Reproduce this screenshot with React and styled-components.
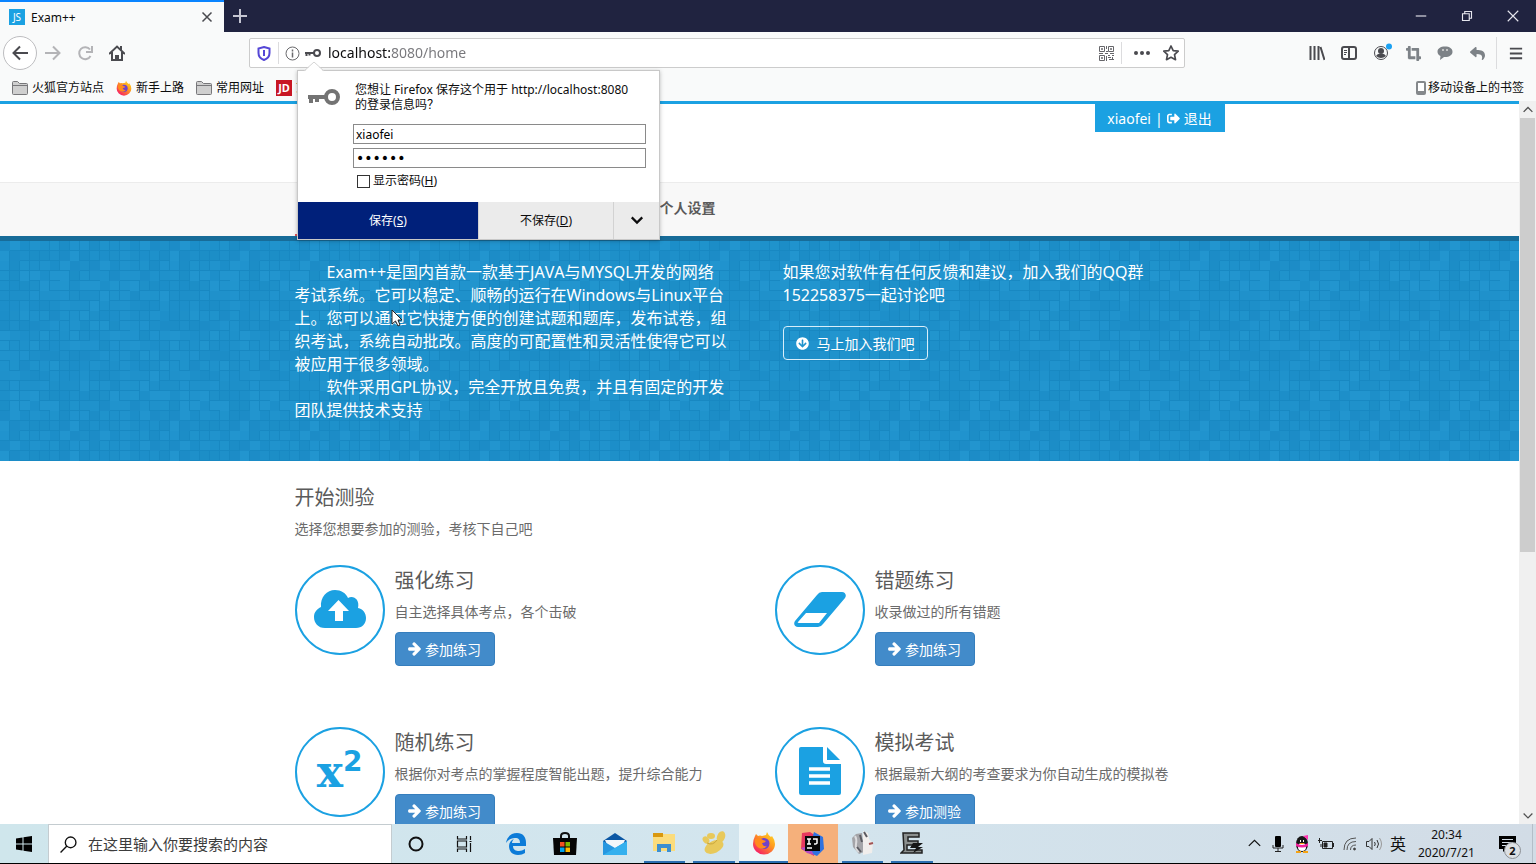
import React from "react"

import styled, {createGlobalStyle, css, ThemeProvider} from "styled-components"
import {FaArrowCircleDown, FaSignOutAlt, FaCropAlt, FaReply} from "react-icons/fa"

const theme = {
    primary: "#1ba1e2",
    button: "#428bca",
    hero: "#1d92cd",
    text: "#5a5a5a",
    chrome: "#f9fafa",
    titlebar: "#202340",
    icon: "#4a4a4f",
    fam: "'Noto Sans', 'Noto Sans CJK SC', sans-serif",
}

const GlobalStyle = createGlobalStyle`
    * { box-sizing: border-box; }
    body {
        margin: 0;
        font-family: ${theme.fam};
        font-kerning: none;
        color: ${theme.text};
        background: #fff;
    }
    button, input { font-family: inherit; }
    h1, h2, p { margin: 0; font-weight: 400; }
    svg { display: block; flex: none; }
`

const center = css`
    display: flex;
    align-items: center;
    justify-content: center;
`

const Screen = styled.div`
    display: flex;
    flex-direction: column;
    height: 100vh;
    overflow: hidden;
`

//BROWSER
const TabBar = styled.div`
    display: flex;
    height: 32px;
    flex: none;
    background: ${props => props.theme.titlebar};
`
const Tab = styled.div`
    display: flex;
    align-items: center;
    gap: 6px;
    width: 224px;
    padding: 0 8px 0 9px;
    border-top: 2px solid #0a84ff;
    background: ${props => props.theme.chrome};
    color: #0c0c0d;
    font-size: 12px;
`
const TabTitle = styled.span`
    flex: 1;
`
const Favicon = styled.span`
    ${center}
    width: 16px;
    height: 16px;
    background: ${props => props.$bg || props.theme.primary};
    color: #fff;
    font-size: ${props => props.$size || 10}px;
    font-weight: ${props => props.$bold ? 700 : 400};
    line-height: 16px;
`
const IconButton = styled.button`
    ${center}
    width: ${props => props.$w || 32}px;
    height: 32px;
    padding: 0;
    border: 0;
    background: none;
    color: ${props => props.$color || props.theme.icon};
`
const TabClose = styled(IconButton)`
    width: 18px;
`
const WindowControls = styled.div`
    display: flex;
    margin-left: auto;
`
const Toolbar = styled.div`
    display: flex;
    align-items: center;
    height: 42px;
    flex: none;
    padding: 0 4px 0 3px;
    background: ${props => props.theme.chrome};
`
const BackButton = styled(IconButton)`
    width: 34px;
    height: 34px;
    border: 1px solid #bdbdc0;
    border-radius: 50%;
    background: #fff;
`
const UrlBar = styled.div`
    position: relative;
    display: flex;
    align-items: center;
    flex: 1;
    height: 30px;
    margin: 0 116px;
    padding-right: 3px;
    border: 1px solid #ccc;
    border-radius: 2px;
    background: #fff;
`
const UrlInput = styled.input`
    flex: 1;
    min-width: 0;
    padding: 0 0 0 7px;
    border: 0;
    font-size: 14px;
    line-height: 20px;
    color: transparent;
    background: linear-gradient(90deg, #0c0c0d 69px, #77777b 69px);
    background-clip: text;
`
const UrlSlot = styled.span`
    ${center}
    width: ${props => props.$w}px;
    color: ${props => props.theme.icon};
`
const Divider = styled.span`
    width: 1px;
    height: ${props => props.$h || 22}px;
    margin: 0 ${props => props.$gap || 0}px;
    background: #dcdcde;
`
const Bookmarks = styled.div`
    display: flex;
    align-items: center;
    gap: 12px;
    height: 27px;
    flex: none;
    padding: 0 12px;
    background: ${props => props.theme.chrome};
`
const Bookmark = styled.a`
    display: flex;
    align-items: center;
    gap: ${props => props.$right ? 2 : 4}px;
    margin-left: ${props => props.$right ? "auto" : 0};
    color: #0c0c0d;
    font-size: 12px;
    line-height: 16px;
    text-decoration: none;
`

//SAVE PASSWORD POPUP
const Popup = styled.form`
    position: absolute;
    z-index: 5;
    top: 31px;
    left: 47px;
    width: 363px;
    border: 1px solid #c8c8c8;
    background: #fff;
    color: #0c0c0d;
    font-size: 12px;
    box-shadow: 0 1px 4px rgba(0, 0, 0, .25);
`
const PopupArrow = styled.svg`
    position: absolute;
    top: -9px;
    left: 6px;
`
const PopupBody = styled.div`
    display: grid;
    grid-template-columns: 55px 1fr;
    padding: 11px 13px 12px 0;
`
const PopupIcon = styled.div`
    padding: 7px 0 0 10px;
    color: #737373;
`
const PopupText = styled.p`
    padding-left: 2px;
    line-height: 15px;
`
const PopupFields = styled.div`
    grid-column: 2;
    display: flex;
    flex-direction: column;
    gap: 4px;
    padding-top: 12px;
`
const PopupInput = styled.input`
    width: 100%;
    height: 20px;
    padding: 0 2px;
    border: 1px solid #8a8a8a;
    background: #fff;
    color: #000;
    font-size: 12px;
    &[type="password"] {
        font-family: "DejaVu Sans", sans-serif;
        font-size: 14px;
    }
`
const CheckLabel = styled.label`
    display: flex;
    align-items: center;
    gap: 3px;
    padding-left: 4px;
    line-height: 18px;
`
const Checkbox = styled.input`
    appearance: none;
    width: 13px;
    height: 13px;
    margin: 0;
    border: 1px solid #333;
    background: #fff;
`
const PopupActions = styled.div`
    display: grid;
    grid-template-columns: 180px 1fr 46px;
    height: 37px;
`
const PopupButton = styled.button`
    ${center}
    padding: 0 0 2px;
    border: 0;
    border-left: ${props => props.$primary ? 0 : 1}px solid #d2d2d2;
    background: ${props => props.$primary ? "#00207a" : "#ebebeb"};
    color: ${props => props.$primary ? "#fff" : "#0c0c0d"};
    font-size: 12px;
`

//PAGE
const Viewport = styled.div`
    display: flex;
    flex: 1;
    min-height: 0;
`
const Page = styled.div`
    position: relative;
    flex: 1;
    overflow: hidden;
    border-top: 3px solid ${props => props.theme.primary};
`
const Container = styled.div`
    position: relative;
    max-width: 930px;
    margin: 0 auto;
`
const Header = styled.header`
    height: 78px;
`
const UserBar = styled.div`
    ${center}
    gap: 4px;
    width: 130px;
    height: 28px;
    margin-left: auto;
    background: ${props => props.theme.primary};
    color: #fff;
    font-size: 14px;
`
const UserLink = styled.a`
    display: flex;
    align-items: center;
    gap: 4px;
    color: #fff;
    text-decoration: none;
`
const NavBar = styled.nav`
    height: 59px;
    border-top: 1px solid #ececec;
    border-bottom: 5px solid #176c99;
    background: #f8f8f8;
`
const NavWrap = styled(Container)`
    display: flex;
    align-items: center;
    justify-content: space-between;
    height: 53px;
`
const NavMarker = styled.span`
    width: 60px;
    align-self: flex-end;
    border-bottom: 2px solid #e0575b;
`
const NavLink = styled.a`
    margin-right: 509px;
    padding-bottom: 5px;
    color: #5a5a5a;
    font-size: 14px;
    font-weight: 700;
    text-decoration: none;
`
const Hero = styled.section`
    position: relative;
    height: 220px;
    padding-top: 20px;
    background: ${props => props.theme.hero};
    color: #fff;
    font-size: 16px;
    line-height: 23px;
`
const HeroTexture = styled.svg`
    position: absolute;
    inset: 0;
    width: 100%;
    height: 100%;
`
const HeroWrap = styled(Container)`
    display: grid;
    grid-template-columns: 432px 1fr;
    gap: 56px;
`
const HeroText = styled.p`
    white-space: nowrap;
    text-indent: ${props => props.$indent ? "2em" : 0};
`
const JoinButton = styled.button`
    ${center}
    gap: 8px;
    height: 34px;
    margin-top: 19px;
    padding: 0 12px;
    border: 1px solid #d8eefa;
    border-radius: 4px;
    background: transparent;
    color: #fff;
    font-size: 14px;
`
const Content = styled(Container)`
    padding-top: 26px;
`
const Title = styled.h2`
    font-size: 20px;
    line-height: 22px;
`
const Desc = styled.p`
    margin-top: 10px;
    color: #6b6b6b;
    font-size: 14px;
    line-height: 20px;
    white-space: nowrap;
`
const Cards = styled.div`
    display: grid;
    grid-template-columns: 1fr 1fr;
    gap: 62px 30px;
    margin-top: 26px;
`
const Card = styled.div`
    display: flex;
    gap: 10px;
    height: 100px;
`
const CardIcon = styled.div`
    ${center}
    flex: none;
    width: 90px;
    height: 90px;
    padding-bottom: 2px;
    border: 2px solid ${props => props.theme.primary};
    border-radius: 50%;
    color: ${props => props.theme.primary};
`
const Power = styled.span`
    font: 700 44px/44px "DejaVu Serif", serif;
    sup {
        font: 700 28px/28px "DejaVu Sans", sans-serif;
        vertical-align: 16px;
    }
`
const CardBody = styled.div`
    padding-top: 5px;
`
const CardButton = styled.a`
    ${center}
    gap: 4px;
    width: 100px;
    height: 34px;
    margin-top: 10px;
    border: 1px solid #357ebd;
    border-radius: 4px;
    background: ${props => props.theme.button};
    color: #fff;
    font-size: 14px;
    text-decoration: none;
`
const Scrollbar = styled.div`
    display: flex;
    flex-direction: column;
    width: 17px;
    flex: none;
    padding: 0 1px;
    background: #f0f0f0;
`
const ScrollArrow = styled(IconButton)`
    width: 15px;
    height: 17px;
    color: #505050;
`
const ScrollTrack = styled.div`
    flex: 1;
`
const ScrollThumb = styled.div`
    height: 63%;
    background: #cdcdcd;
`
const Cursor = styled.svg`
    position: absolute;
    top: 205px;
    left: 391px;
`

//TASKBAR
const Taskbar = styled.footer`
    display: flex;
    height: 40px;
    flex: none;
    border-bottom: 1px solid #000;
    background: linear-gradient(90deg, #cfe6ec, #d3e5ee 50%, #d2dce6);
    color: #111;
`
const TaskButton = styled.button`
    ${center}
    width: ${props => props.$w ? props.$w + "px" : "auto"};
    padding: 0;
    border: 0;
    border-bottom: ${props => props.$active ? 2 : 0}px solid #2a6db0;
    background: ${props => props.$bg || "transparent"};
    color: inherit;
`
const RunningButton = styled(TaskButton)`
    margin: 0 4px;
    border-bottom: 2px solid #2a6db0;
`
const SearchBox = styled.label`
    display: flex;
    align-items: center;
    gap: 11px;
    width: 344px;
    padding-left: 11px;
    border: 1px solid #c4ccd0;
    border-width: 1px 1px 0;
    background: #fff;
`
const SearchInput = styled.input`
    flex: 1;
    min-width: 0;
    padding: 0;
    border: 0;
    background: none;
    font-size: 15px;
    &::placeholder {
        color: #3c3c3c;
        opacity: 1;
    }
`
const Apps = styled.div`
    display: grid;
    grid-template-columns: repeat(9, 1fr);
    width: 446px;
    margin-left: 3px;
`
const Tray = styled.div`
    display: flex;
    margin-left: auto;
    padding-right: 3px;
`
const Lang = styled(TaskButton)`
    padding-bottom: 2px;
    font-size: 16px;
`
const Clock = styled.time`
    width: 73px;
    padding-top: 2px;
    font-size: 12px;
    line-height: 18px;
    text-align: center;
`
const Notice = styled(TaskButton)`
    position: relative;
    border-right: 1px solid #b4bec8;
`
const Badge = styled.span`
    ${center}
    position: absolute;
    top: 18px;
    left: 21px;
    width: 17px;
    height: 17px;
    border: 1px solid #8b8f94;
    border-radius: 50%;
    background: #dcdfe2;
    font-size: 11px;
    font-weight: 700;
`

//ICONS
const Stroke = ({size = 16, w = 2, d, ...rest}) => (
    <svg width={size} height={size} viewBox="0 0 16 16" fill="none" stroke="currentColor" strokeWidth={w} {...rest}>
        <path d={d}/>
    </svg>
)

const KeyIcon = ({width}) => (
    <svg width={width} height={width / 2} viewBox="0 0 32 16" fill="none" stroke="currentColor" strokeWidth="4">
        <circle cx="24" cy="8" r="6"/>
        <path d="M18 8H0M3 8v6M9 8v5"/>
    </svg>
)

const FolderIcon = () => (
    <svg width="16" height="14" viewBox="0 0 16 14" fill="#cfcfcf" stroke="#77777a">
        <path d="M.5 12.5v-11q0-1 1-1h4l2 2h7q1 0 1 1v9q0 1-1 1h-13q-1 0-1-1z"/>
        <path d="M.5 4.5h15"/>
    </svg>
)

const FirefoxIcon = ({size}) => (
    <svg width={size} height={size} viewBox="0 0 24 24">
        <defs>
            <linearGradient id="fx" x1="1" y1="0" x2=".2" y2="1">
                <stop offset="0" stopColor="#ffe226"/>
                <stop offset=".45" stopColor="#ff9a1f"/>
                <stop offset="1" stopColor="#f5156c"/>
            </linearGradient>
        </defs>
        <path fill="url(#fx)" d="M3 5l1-2 2 2q2-1 4 0l4-1 1-3q1 3 4 5l1-1q3 4 3 8a11 10.500 0 0 1-22 0q0-4 2-8z"/>
        <circle cx="12" cy="12.500" r="5.500" fill="#7042c8"/>
        <path fill="#ff8a1c" d="M3 8q5-2 8 1l3 1q-1 2-4 2 1 4 5 3-3 4-8 2-5-3-4-9z"/>
    </svg>
)

const LibraryIcon = () => <Stroke d="M1.500 1v14M5.500 1v14M9.500 1v14M11.500 2l4 13"/>

const SidebarIcon = () => (
    <svg width="16" height="16" viewBox="0 0 16 16" fill="none" stroke="currentColor">
        <rect x="1" y="2" width="14" height="12" rx="2" strokeWidth="2"/>
        <path d="M8 2v12" strokeWidth="2"/>
        <path d="M3 5.500h3M3 7.500h3M3 9.500h2"/>
    </svg>
)

const AccountIcon = () => (
    <svg width="22" height="22" viewBox="0 0 22 22">
        <circle cx="11" cy="11" r="6.500" fill="none" stroke="currentColor"/>
        <circle cx="11" cy="9" r="3" fill="currentColor"/>
        <path d="M6 14q2-3 5-2 3-1 5 2-5 4-10 0z" fill="currentColor"/>
        <circle cx="19" cy="4.500" r="3" fill="#1ba1f2"/>
    </svg>
)

const ChatIcon = () => (
    <svg width="16" height="16" viewBox="0 0 16 16">
        <path fill="currentColor" d="M8 1.500c4.500 0 7.500 2 7.500 5.200S12.500 12 8 12l-1 0-4 3 .5-4C1.500 10 .5 8.500.5 6.700.5 3.500 3.500 1.500 8 1.500z"/>
        <path stroke="#d8d8d8" strokeWidth="1.500" d="M5 5h2M9 5h2"/>
    </svg>
)

const QrIcon = () => (
    <svg width="15" height="15" viewBox="0 0 15 15" fill="none" stroke="#66666a">
        <path d="M.5.5h5v5h-5zM9.500.5h5v5h-5zM.5 9.500h5v5h-5zM2 3h2M3 2v2M11 3h2M12 2v2M2 12h2M3 11v2M7.500 0v3M7 5.500h2M0 7.500h4M6 7.500h3M11 7.500h4M7.500 10v5M9 9.500h2M13 9.500h2M9 11.500h3M10 13.500h5M13.500 11v2"/>
    </svg>
)

const ArrowIcon = () => (
    <svg width="13" height="14" viewBox="0 150 1472 1620" fill="currentColor">
        <path d="M1472 960q0 54-37 91l-651 651q-39 37-91 37-51 0-90-37l-75-75q-38-38-38-91t38-91l293-293H117q-52 0-84-37T0 1024V896q0-53 33-90t84-38h704L528 474q-38-36-38-90t38-90l75-75q38-38 90-38 53 0 91 38l651 651q37 35 37 90z"/>
    </svg>
)

const CloudIcon = () => (
    <svg width="52" height="38" viewBox="0 0 52 38">
        <path fill="currentColor" d="M11 38C4 38 0 33 0 27c0-5 3-8 7-10C6 7 13 0 21 0c6 0 11 3 13 8 5-3 12 1 10 10 5 1 8 5 8 10 0 6-4 10-10 10z"/>
        <path fill="#fff" d="M24.500 10L35 21h-6v10h-8V21h-7z"/>
    </svg>
)

const EraserIcon = () => (
    <svg width="52" height="35" viewBox="0 0 52 35" fill="currentColor">
        <path fillRule="evenodd" d="M28 0h20c3 0 5 3 3 6L29 32q-2 3-5 3H4c-3 0-5-3-3-6L23 3q2-3 5-3zM12 21L4 30q-1 1 1 1h20l8-10z"/>
    </svg>
)

const FileIcon = () => (
    <svg width="42" height="48" viewBox="0 0 42 48" fill="currentColor">
        <path d="M2 0h22v14q0 3 3 3h15v29q0 2-2 2H2q-2 0-2-2V2q0-2 2-2z"/>
        <path d="M28 0l13 13H28z"/>
        <path stroke="#fff" strokeWidth="3.500" d="M10 22h21M10 29h21M10 36h21"/>
    </svg>
)

// tiles of the hero background, shade picked by a small hash
const tiles = []
for (let y = 0; y < 20; y++) {
    for (let x = 0; x < 24; x++) {
        const n = (x * 73 + y * 151 + x * y * 37 + x * x * 11) % 17
        tiles.push({x: x * 10, y: y * 10, w: n % 4 === 0 ? 10 : 9, h: n % 5 === 0 ? 10 : 9, o: 0.18 + n / 17 * 0.34})
    }
}

const Texture = () => (
    <HeroTexture aria-hidden="true">
        <defs>
            <pattern id="tiles" width="240" height="200" patternUnits="userSpaceOnUse">
                <rect width="240" height="200" fill="#1888c2"/>
                {tiles.map((t, i) => (
                    <rect key={i} x={t.x} y={t.y} width={t.w} height={t.h} fill="#2ba2dc" opacity={t.o}/>
                ))}
            </pattern>
        </defs>
        <rect width="100%" height="100%" fill="url(#tiles)"/>
    </HeroTexture>
)

const EdgeIcon = () => (
    <svg width="22" height="24" viewBox="0 0 22 24" fill="#0c7bd8">
        <path d="M1 11C2 4 7 1 12 1c6 0 9 4 9 10v3H8c0 4 3 5 6 5 2 0 4-1 6-2v4c-2 1-4 2-7 2-6 0-9-4-9-9 0-3 2-6 5-7-1 1-2 2-2 4h8c0-3-1-5-5-5-4 0-7 2-9 5z"/>
    </svg>
)

const StoreIcon = () => (
    <svg width="24" height="24" viewBox="0 0 24 24">
        <path d="M8 7V4q0-3 4-3t4 3v3" fill="none" stroke="#111" strokeWidth="2"/>
        <path d="M0 6h24l-1 17H1z" fill="#050505"/>
        <path d="M7 10h4.500v4.500H7z" fill="#f25022"/>
        <path d="M12.500 10H17v4.500h-4.500z" fill="#7fba00"/>
        <path d="M7 15.500h4.500V20H7z" fill="#00a4ef"/>
        <path d="M12.500 15.500H17V20h-4.500z" fill="#ffb900"/>
    </svg>
)

const MailIcon = () => (
    <svg width="26" height="24" viewBox="0 0 26 24">
        <path d="M1 9L13 1l12 8v5H1z" fill="#0b57a4"/>
        <path d="M3 8h20l-4 9H7z" fill="#f4f7fa"/>
        <path d="M1 9l12 7 12-7v14H1z" fill="#2797e0"/>
        <path d="M1 23l24-14v14z" fill="#35b0ee"/>
    </svg>
)

const ExplorerIcon = () => (
    <svg width="24" height="22" viewBox="0 0 24 22">
        <path d="M1 2h22v17H1z" fill="#fbdc7c"/>
        <path d="M1 1h10v4H1z" fill="#d9980f"/>
        <path d="M5 20v-8h14v8h-4v-4H9v4z" fill="#3c8fd0"/>
    </svg>
)

const PawIcon = () => (
    <svg width="24" height="24" viewBox="0 0 24 24" fill="#e8c95b">
        <ellipse cx="4" cy="9" rx="3" ry="4" transform="rotate(-35 4 9)"/>
        <ellipse cx="9" cy="5" rx="4" ry="3"/>
        <ellipse cx="19" cy="6" rx="4" ry="6" transform="rotate(20 19 6)"/>
        <ellipse cx="12" cy="16" rx="10" ry="6" transform="rotate(-25 12 16)"/>
        <path d="M5 12q6 3 10-3" fill="none" stroke="#c9a63c"/>
    </svg>
)

const IdeaIcon = () => (
    <svg width="26" height="26" viewBox="0 0 26 26">
        <path d="M2 2l8-1 6 4-2 20-7-4-6-3z" fill="#e8385f"/>
        <path d="M14 1l9 5 1 12-7 7-9-4z" fill="#2f72e0"/>
        <path d="M1 17l8-2 5 9-7-2z" fill="#b34bc4"/>
        <rect x="5" y="5" width="15" height="15" fill="#080808"/>
        <path d="M7 8h4M9 8v5M7 13h4M13 8h4v4q0 1-3 1M7 17h5" fill="none" stroke="#fff" strokeWidth="1.500"/>
    </svg>
)

const PhotoIcon = () => (
    <svg width="24" height="26" viewBox="0 0 24 26">
        <path d="M5 4l6-1 2 19-5 2-6-7-1-9z" fill="#a4a4a8"/>
        <path d="M12 1l5 2 1 6 4 4-1 10-9 2z" fill="#f1eeec"/>
        <path d="M4 6q2 3 1 8t3 8" fill="none" stroke="#dcdcde" strokeWidth="2"/>
        <path d="M9 5l2 7M13 2l3 5M6 17l4 5" fill="none" stroke="#5b5b61" strokeWidth="2"/>
        <path d="M18 14l4-1" stroke="#a25454" strokeWidth="2"/>
    </svg>
)

const ToolIcon = () => (
    <svg width="24" height="24" viewBox="0 0 24 24">
        <path d="M3 2h16v4H8v4h10v4H7v5h15v3H1l3-3z" fill="#8b8f8e" stroke="#222" strokeWidth="1.500"/>
        <path d="M13 12h10l-5 4h5l-10 6 3-5h-6z" fill="#161616"/>
    </svg>
)

const QqIcon = () => (
    <svg width="14" height="18" viewBox="0 0 14 18">
        <ellipse cx="7" cy="9" rx="6" ry="8" fill="#161616"/>
        <ellipse cx="7" cy="12" rx="4" ry="4" fill="#fff"/>
        <path d="M1 8q6 4 12 0v3q-6 3-12 0z" fill="#f0209a"/>
        <path d="M8 1l5-1v5z" fill="#ff36b1"/>
        <path d="M5 5h1v2H5zM8 5h1v2H8z" fill="#fff"/>
        <path d="M1 16h5v2H1zM8 16h5v2H8zM5 8h4v1H5z" fill="#f6a313"/>
    </svg>
)

const cards = [
    {title: "强化练习", desc: "自主选择具体考点，各个击破", action: "参加练习", icon: <CloudIcon/>},
    {title: "错题练习", desc: "收录做过的所有错题", action: "参加练习", icon: <EraserIcon/>},
    {title: "随机练习", desc: "根据你对考点的掌握程度智能出题，提升综合能力", action: "参加练习", icon: <Power>x<sup>2</sup></Power>},
    {title: "模拟考试", desc: "根据最新大纲的考查要求为你自动生成的模拟卷", action: "参加测验", icon: <FileIcon/>},
]

const SavePassword = () => (
    <Popup onSubmit={e => e.preventDefault()}>
        <PopupArrow width="20" height="10" viewBox="0 0 20 10">
            <path d="M0 10L10 0l10 10z" fill="#fff"/>
            <path d="M0 9L10 0l10 9" fill="none" stroke="#d4d4d4"/>
        </PopupArrow>
        <PopupBody>
            <PopupIcon><KeyIcon width={32}/></PopupIcon>
            <PopupText>您想让 Firefox 保存这个用于 http://localhost:8080<br/>的登录信息吗？</PopupText>
            <PopupFields>
                <PopupInput aria-label="用户名" defaultValue="xiaofei"/>
                <PopupInput aria-label="密码" type="password" defaultValue="123456"/>
                <CheckLabel><Checkbox type="checkbox"/><span>显示密码(<u>H</u>)</span></CheckLabel>
            </PopupFields>
        </PopupBody>
        <PopupActions>
            <PopupButton $primary><span>保存(<u>S</u>)</span></PopupButton>
            <PopupButton type="button"><span>不保存(<u>D</u>)</span></PopupButton>
            <PopupButton type="button" aria-label="更多"><Stroke size={14} w={2.5} d="M2 5l6 6 6-6"/></PopupButton>
        </PopupActions>
    </Popup>
)

const Browser = () => (
    <>
        <TabBar>
            <Tab>
                <Favicon>JS</Favicon>
                <TabTitle>Exam++</TabTitle>
                <TabClose aria-label="关闭标签页"><Stroke size={12} w={2} d="M2 2l12 12M14 2L2 14"/></TabClose>
            </Tab>
            <IconButton $color="#c5c6d2" aria-label="新标签页"><Stroke d="M8 1v14M1 8h14"/></IconButton>
            <WindowControls>
                <IconButton $w={46} $color="#e6e6ee" aria-label="最小化"><Stroke size={12} w={1.5} d="M1 8h14"/></IconButton>
                <IconButton $w={46} $color="#e6e6ee" aria-label="还原"><Stroke size={12} w={1.5} d="M2 5h9v9H2zM5 5V2h9v9h-3"/></IconButton>
                <IconButton $w={46} $color="#e6e6ee" aria-label="关闭"><Stroke size={12} w={1.5} d="M1 1l14 14M15 1L1 15"/></IconButton>
            </WindowControls>
        </TabBar>
        <Toolbar>
            <BackButton aria-label="后退"><Stroke d="M16 8H1M8 1.500L1.500 8 8 14.500"/></BackButton>
            <IconButton $color="#b4b4b7" aria-label="前进"><Stroke d="M0 8h15M8 1.500L14.500 8 8 14.500"/></IconButton>
            <IconButton $color="#b4b4b7" aria-label="刷新"><Stroke d="M13.500 11A6 6 0 1 1 13 4.500M15 1v6H9"/></IconButton>
            <IconButton aria-label="主页"><Stroke d="M0 9l8-7.500L16 9M3 7v8h10V7M7 15v-4h2v4M12 5V1"/></IconButton>
            <UrlBar>
                <UrlSlot $w={28}>
                    <svg width="14" height="15" viewBox="0 0 14 15" fill="none" stroke="#5547d6" strokeWidth="2">
                        <path d="M7 1l5.500 1.500V7q0 5-5.500 7Q1.500 12 1.500 7V2.500z"/>
                        <path d="M7 4v6"/>
                    </svg>
                </UrlSlot>
                <Divider/>
                <UrlSlot $w={26}>
                    <svg width="15" height="15" viewBox="0 0 15 15" fill="none" stroke="#6a6a6d">
                        <circle cx="7.500" cy="7.500" r="6.500"/>
                        <path d="M7.500 6.500v5M7.500 3.500v2" strokeWidth="1.500"/>
                    </svg>
                </UrlSlot>
                <UrlSlot $w={16}><KeyIcon width={16}/></UrlSlot>
                <UrlInput aria-label="地址" defaultValue="localhost:8080/home"/>
                <UrlSlot $w={29}><QrIcon/></UrlSlot>
                <Divider/>
                <UrlSlot $w={39}>
                    <svg width="16" height="4" viewBox="0 0 16 4" fill="currentColor">
                        <circle cx="2" cy="2" r="2"/><circle cx="8" cy="2" r="2"/><circle cx="14" cy="2" r="2"/>
                    </svg>
                </UrlSlot>
                <UrlSlot $w={20}><Stroke w={1.7} strokeLinejoin="round" d="M8 1l2.200 4.600 5 .6-3.700 3.500 1 5L8 12.300 3.500 14.700l1-5L.8 6.200l5-.6z"/></UrlSlot>
                <SavePassword/>
            </UrlBar>
            <IconButton aria-label="书库"><LibraryIcon/></IconButton>
            <IconButton aria-label="侧栏"><SidebarIcon/></IconButton>
            <IconButton aria-label="账户"><AccountIcon/></IconButton>
            <IconButton $color="#7d8287" aria-label="截图"><FaCropAlt size={15}/></IconButton>
            <IconButton $color="#7d8287" aria-label="聊天"><ChatIcon/></IconButton>
            <IconButton $color="#7d8287" aria-label="撤销"><FaReply size={15}/></IconButton>
            <Divider $h={32} $gap={3}/>
            <IconButton aria-label="菜单"><Stroke size={14} w={2.2} d="M1 3h14M1 8.500h14M1 14h14"/></IconButton>
        </Toolbar>
        <Bookmarks>
            <Bookmark href="#"><FolderIcon/>火狐官方站点</Bookmark>
            <Bookmark href="#"><FirefoxIcon size={16}/>新手上路</Bookmark>
            <Bookmark href="#"><FolderIcon/>常用网址</Bookmark>
            <Bookmark href="#"><Favicon $bg="#c81623" $size={11} $bold>JD</Favicon>京东商城</Bookmark>
            <Bookmark href="#" $right>
                <svg width="10" height="14" viewBox="0 0 10 14">
                    <rect width="10" height="14" rx="2" fill="#85888b"/>
                    <path d="M2 2h6v8H2z" fill="#fff"/>
                </svg>
                移动设备上的书签
            </Bookmark>
        </Bookmarks>
    </>
)

const Home = () => (
    <Page>
        <Header>
            <Container>
                <UserBar>
                    <UserLink href="#">xiaofei</UserLink>|<UserLink href="#"><FaSignOutAlt size={13}/>退出</UserLink>
                </UserBar>
            </Container>
        </Header>
        <NavBar>
            <NavWrap>
                <NavMarker/>
                <NavLink href="#">个人设置</NavLink>
            </NavWrap>
        </NavBar>
        <Hero>
            <Texture/>
            <HeroWrap>
                <div>
                    <HeroText $indent>
                        Exam++是国内首款一款基于JAVA与MYSQL开发的网络<br/>
                        考试系统。它可以稳定、顺畅的运行在Windows与Linux平台<br/>
                        上。您可以通过它快捷方便的创建试题和题库，发布试卷，组<br/>
                        织考试，系统自动批改。高度的可配置性和灵活性使得它可以<br/>
                        被应用于很多领域。
                    </HeroText>
                    <HeroText $indent>
                        软件采用GPL协议，完全开放且免费，并且有固定的开发<br/>
                        团队提供技术支持
                    </HeroText>
                </div>
                <div>
                    <HeroText>
                        如果您对软件有任何反馈和建议，加入我们的QQ群<br/>
                        152258375一起讨论吧
                    </HeroText>
                    <JoinButton><FaArrowCircleDown size={13}/>马上加入我们吧</JoinButton>
                </div>
            </HeroWrap>
        </Hero>
        <Content as="main">
            <Title as="h1">开始测验</Title>
            <Desc>选择您想要参加的测验，考核下自己吧</Desc>
            <Cards>
                {cards.map(card => (
                    <Card key={card.title}>
                        <CardIcon>{card.icon}</CardIcon>
                        <CardBody>
                            <Title>{card.title}</Title>
                            <Desc>{card.desc}</Desc>
                            <CardButton href="#"><ArrowIcon/>{card.action}</CardButton>
                        </CardBody>
                    </Card>
                ))}
            </Cards>
        </Content>
        <Cursor width="12" height="18" viewBox="0 0 12 18">
            <path d="M1 1v14l3.500-3 2.500 5 2-1-2-5h4z" fill="#fff" stroke="#222"/>
        </Cursor>
    </Page>
)

const WindowsBar = () => (
    <Taskbar>
        <TaskButton $w={48} aria-label="开始">
            <svg width="16" height="16" viewBox="0 0 16 16"><path d="M0 2.500l6.500-1v6H0zM7.500 1.300L16 0v7.500H7.500zM0 8.500h6.500v6l-6.500-1zM7.500 8.500H16V16l-8.500-1.300z"/></svg>
        </TaskButton>
        <SearchBox>
            <Stroke size={17} w={1.3} d="M15 6a5 5 0 1 1-10 0 5 5 0 0 1 10 0zM6.500 9.500L.5 15.500"/>
            <SearchInput aria-label="搜索" placeholder="在这里输入你要搜索的内容"/>
        </SearchBox>
        <TaskButton $w={48} aria-label="Cortana">
            <svg width="16" height="16" viewBox="0 0 16 16" fill="none" stroke="#111" strokeWidth="2"><circle cx="8" cy="8" r="6.500"/></svg>
        </TaskButton>
        <TaskButton $w={48} aria-label="任务视图"><Stroke w={1.2} d="M1.500 0v3h9V0M1.500 5h9v6h-9zM1.500 16v-3h9v3M14.500 0v4M14.500 7v9M13.500 5.500h2"/></TaskButton>
        <Apps>
            <TaskButton aria-label="Edge"><EdgeIcon/></TaskButton>
            <TaskButton aria-label="应用商店"><StoreIcon/></TaskButton>
            <TaskButton aria-label="邮件"><MailIcon/></TaskButton>
            <RunningButton aria-label="文件资源管理器"><ExplorerIcon/></RunningButton>
            <RunningButton aria-label="应用"><PawIcon/></RunningButton>
            <TaskButton $active $bg="#eef6f8" aria-label="Firefox"><FirefoxIcon size={24}/></TaskButton>
            <TaskButton $bg="#f5b07b" aria-label="IntelliJ IDEA"><IdeaIcon/></TaskButton>
            <RunningButton aria-label="照片"><PhotoIcon/></RunningButton>
            <RunningButton aria-label="工具"><ToolIcon/></RunningButton>
        </Apps>
        <Tray>
            <TaskButton $w={24} aria-label="显示隐藏的图标"><Stroke size={13} w={1.5} d="M1 11l7-7 7 7"/></TaskButton>
            <TaskButton $w={24} aria-label="麦克风">
                <svg width="12" height="16" viewBox="0 0 12 16"><rect x="3" width="6" height="11" rx="1"/><path d="M1 9v3h10V9M6 12v3M3 15.500h6" fill="none" stroke="#222"/></svg>
            </TaskButton>
            <TaskButton $w={24} aria-label="QQ"><QqIcon/></TaskButton>
            <TaskButton $w={24} aria-label="电池">
                <svg width="17" height="12" viewBox="0 0 17 12" fill="none" stroke="#222"><path d="M4.500 3.500h10v7h-10zM15.500 5v4M0 2.500h4M1.500 0v5M3 6v3"/><path d="M6 5h3v4H6z" fill="#222"/></svg>
            </TaskButton>
            <TaskButton $w={24} aria-label="网络">
                <svg width="14" height="14" viewBox="0 0 14 14" fill="none" stroke="#555"><path d="M1 13Q1 1 13 1M4 13Q4 4.500 13 4.500M7.500 13Q7.500 8 13 8"/><circle cx="11.500" cy="12" r="1" fill="#222"/></svg>
            </TaskButton>
            <TaskButton $w={24} aria-label="音量">
                <svg width="17" height="14" viewBox="0 0 17 14" fill="none" stroke="#333"><path d="M.5 4.500h2.500l3-3v11l-3-3H.5zM8.500 5q1.500 2 0 4M11 3q3 4 0 8"/><path d="M13.500 1q4 6 0 12" stroke="#999"/></svg>
            </TaskButton>
            <Lang $w={24}>英</Lang>
            <Clock>20:34<br/>2020/7/21</Clock>
            <Notice $w={50} aria-label="通知">
                <svg width="17" height="16" viewBox="0 0 17 16"><path d="M0 0h17v13H7l-3 3v-3H0z"/><path d="M3 3.500h11M3 6.500h11M3 9.500h8" stroke="#d4dde6"/></svg>
                <Badge>2</Badge>
            </Notice>
        </Tray>
    </Taskbar>
)

const App = () => (
    <ThemeProvider theme={theme}>
        <GlobalStyle/>
        <Screen>
            <Browser/>
            <Viewport>
                <Home/>
                <Scrollbar>
                    <ScrollArrow aria-label="向上"><Stroke size={10} d="M1 11l7-7 7 7"/></ScrollArrow>
                    <ScrollTrack><ScrollThumb/></ScrollTrack>
                    <ScrollArrow aria-label="向下"><Stroke size={10} d="M1 4l7 7 7-7"/></ScrollArrow>
                </Scrollbar>
            </Viewport>
            <WindowsBar/>
        </Screen>
    </ThemeProvider>
)

export default App
